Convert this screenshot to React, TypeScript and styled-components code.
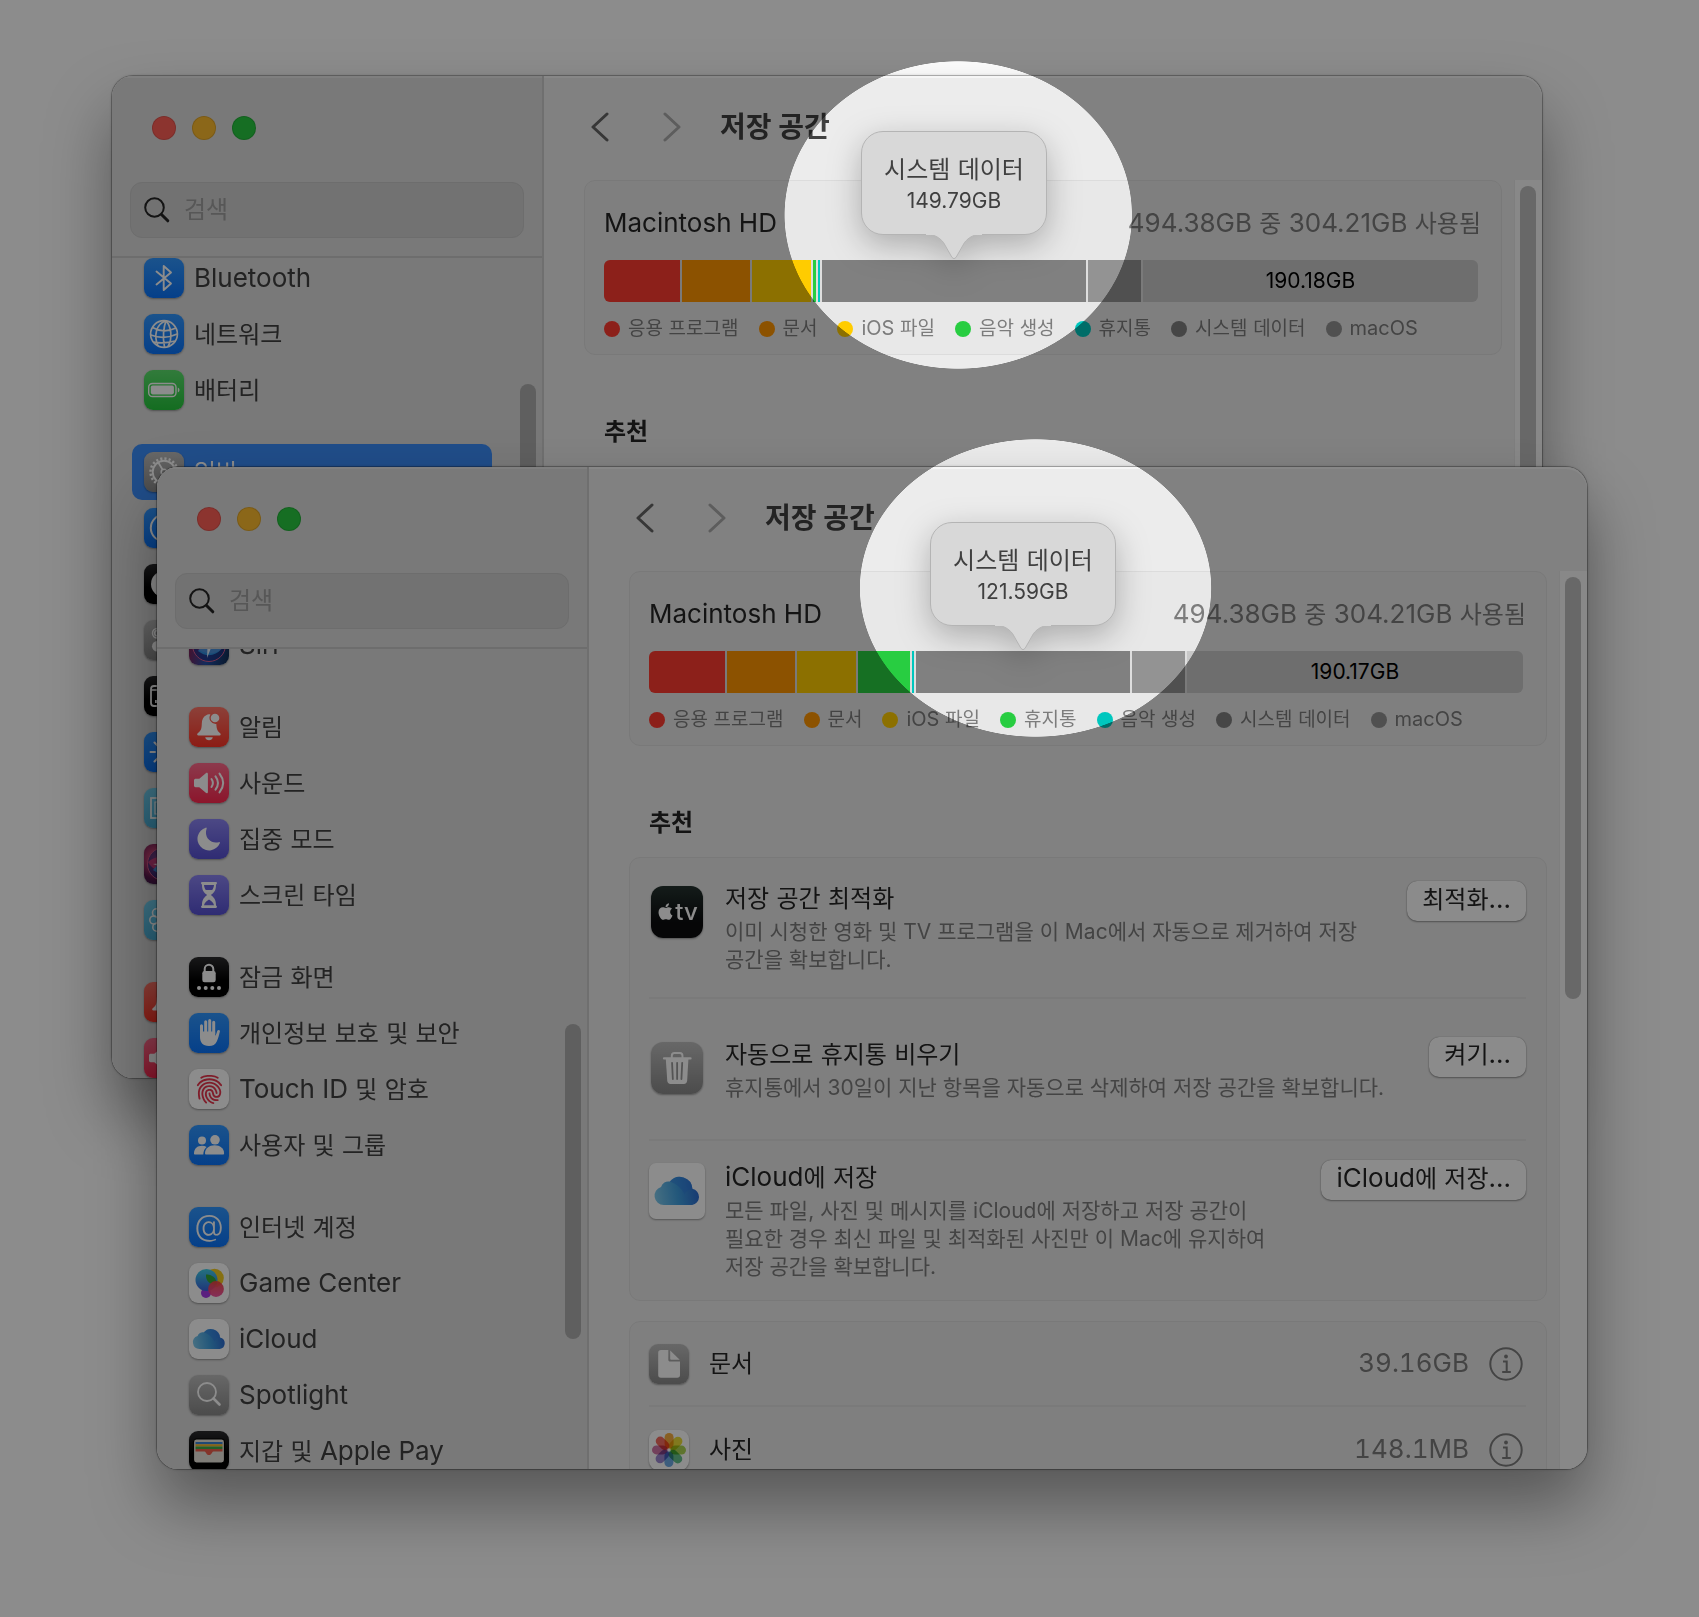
import React from "react";
import styled, { createGlobalStyle, css } from "styled-components";
import { FaApple } from "react-icons/fa";
import { IoFingerPrint } from "react-icons/io5";

const FONT = `Inter, "Noto Sans CJK KR", sans-serif`;

const GlobalStyle = createGlobalStyle`
  * { box-sizing: border-box; }
  html, body { margin: 0; padding: 0; background: #fff; }
  body { font-family: ${FONT}; font-size: 24px; line-height: 36px; color: #262626; }
  button, input { font-family: inherit; font-size: inherit; line-height: inherit; color: inherit; margin: 0; }
  ul, h1, h2, h3, p { margin: 0; padding: 0; font-size: inherit; font-weight: inherit; }
  ul { list-style: none; }
  svg { display: block; }
`;

/* ---------- mixed Korean / Latin text ---------- */

const LatinRun = styled.span<{ $size: number }>`
  font-size: ${(p) => p.$size}px;
  line-height: 1;
`;

/* Latin letters look small beside Hangul, so Latin runs are set one step larger. */
const Mixed = ({ children, latin = 26 }: { children: string; latin?: number }) => (
  <span>
    {children
      .split(/([A-Za-z0-9. ]+)/)
      .filter(Boolean)
      .map((part, i) =>
        /^[A-Za-z0-9. ]/.test(part) ? (
          <LatinRun key={i} $size={latin}>
            {part}
          </LatinRun>
        ) : (
          part
        ),
      )}
  </span>
);

/* ---------- desktop ---------- */

const Desktop = styled.main`
  position: relative;
  min-height: 100vh;
  overflow: hidden;
`;

const Window = styled.section<{ $x: number; $y: number }>`
  position: absolute;
  left: ${(p) => p.$x}px;
  top: ${(p) => p.$y}px;
  width: calc(100% - 269px);
  height: calc(100vh - 615px);
  min-width: 1200px;
  min-height: 700px;
  border-radius: 21px;
  box-shadow: 0 0 0 1px rgba(0, 0, 0, 0.22), 0 0 3px rgba(0, 0, 0, 0.3), 0 36px 66px rgba(0, 0, 0, 0.38);
`;

const WindowBody = styled.div`
  display: flex;
  height: 100%;
  border-radius: inherit;
  overflow: hidden;
  background: #ececec;
  box-shadow: inset 0 2px 0 #f6f6f6;
`;

/* Darkens the desktop except for two elliptical spotlights. */
const Dim = styled.div`
  position: absolute;
  inset: 0;
  z-index: 10;
  pointer-events: none;
  background: rgba(0, 0, 0, 0.45);
  mask-image: radial-gradient(174px 154px at 56.4% 215px, transparent 99.6%, #000 100%),
    radial-gradient(176px 149px at 60.95% 588px, transparent 99.6%, #000 100%);
  mask-composite: intersect;
`;

/* ---------- sidebar ---------- */

const Sidebar = styled.aside`
  display: flex;
  flex-direction: column;
  flex: 0 0 432px;
  min-width: 0;
  background: #dcdcdc;
  border-right: 2px solid #cbcbcb;
  box-shadow: inset 0 2px 0 #e8e8e8;
`;

const Lights = styled.div`
  display: flex;
  gap: 16px;
  padding: 40px 40px 42px;
`;

const Light = styled.button<{ $color: string }>`
  width: 24px;
  height: 24px;
  padding: 0;
  border: 1px solid rgba(0, 0, 0, 0.12);
  border-radius: 50%;
  background: ${(p) => p.$color};
`;

const Search = styled.label`
  display: flex;
  align-items: center;
  gap: 14px;
  height: 56px;
  margin: 0 18px 18px;
  padding: 0 13px;
  border: 1px solid #c6c6c6;
  border-radius: 12px;
  background: #cfcfcf;
`;

const SearchInput = styled.input`
  flex: 1;
  width: 0;
  padding: 0;
  border: 0;
  outline: 0;
  background: transparent;
  &::placeholder { color: #9e9e9e; opacity: 1; }
`;

const SidebarScroll = styled.div`
  display: flex;
  flex: 1;
  min-height: 0;
  overflow: hidden;
  border-top: 2px solid #c6c6c6;
`;

const Nav = styled.nav`
  flex: 1;
  padding: 0 28px 0 20px;
`;

const Group = styled.ul`
  margin-bottom: 26px;
`;

const NavLink = styled.a<{ $selected?: boolean }>`
  display: flex;
  align-items: center;
  gap: 10px;
  height: 56px;
  padding: 0 12px;
  border-radius: 10px;
  color: #404040;
  text-decoration: none;
  white-space: nowrap;
  ${(p) => p.$selected && css`background: #3b8dfa; color: #fff;`}
`;

const NavLabel = styled.span`
  padding-top: 2px;
`;

const Track = styled.div<{ $main?: boolean }>`
  display: flex;
  flex: none;
  ${(p) =>
    p.$main
      ? css`width: 28px; padding: 6px 6px 0 5px; background: #f8f8f8; border-left: 1px solid #e6e6e6;`
      : css`width: 22px; padding: 0 6px 0 0;`}
`;

const Thumb = styled.div<{ $light?: boolean }>`
  width: 16px;
  border-radius: 8px;
  background: ${(p) => (p.$light ? "#bebebe" : "#adadad")};
`;

/* ---------- icon tiles ---------- */

const tones = {
  blue: "linear-gradient(#3197ff, #0a74fa)",
  green: "linear-gradient(#5be06c, #25c63c)",
  red: "linear-gradient(#ff7668, #ff3426)",
  pink: "linear-gradient(#ff6a8c, #ff2850)",
  purple: "linear-gradient(#8b84f2, #5650d2)",
  gray: "linear-gradient(#bdbdbd, #8a8a8a)",
  black: "linear-gradient(#2c2c2e, #000 60%)",
  white: "#fff",
  cyan: "linear-gradient(#74d4f5, #4bb4de)",
  siri: "radial-gradient(circle at 30% 35%, #ff5a8a, #5b1950 55%, #1a2050)",
  siriBlue: "linear-gradient(100deg, #8d1745, #2450a8 50%, #102c50)",
  tv: "linear-gradient(#25332f, #0b0c0e 70%)",
};
type Tone = keyof typeof tones;

const Tile = styled.span<{ $tone: Tone; $size?: number }>`
  display: flex;
  flex: none;
  align-items: center;
  justify-content: center;
  width: ${(p) => p.$size ?? 40}px;
  height: ${(p) => p.$size ?? 40}px;
  border-radius: ${(p) => (p.$size === 52 ? 12 : p.$size === 56 ? 7 : 9)}px;
  overflow: hidden;
  background: ${(p) => tones[p.$tone]};
  box-shadow: 0 1px 2px rgba(0, 0, 0, 0.35);
  color: #fff;
`;

const TvMark = styled.span`
  display: flex;
  align-items: center;
  font-size: 24px;
  font-weight: 500;
  line-height: 24px;
  svg { margin-bottom: 2px; }
`;

const AtMark = styled.span`
  height: 38px;
  font-size: 30px;
  font-weight: 300;
  line-height: 34px;
`;

const Glyph = ({ size = 40, children }: { size?: number; children: React.ReactNode }) => (
  <svg width={size} height={size} viewBox="0 0 40 40" fill="none" stroke="none" aria-hidden="true">
    {children}
  </svg>
);

const Cloud = ({ size, id }: { size: number; id: string }) => (
  <Glyph size={size}>
    <defs>
      <linearGradient id={id} x1="0" x2="1" y1="0.4" y2="0.3">
        <stop offset="0" stopColor="#7cc8ec" />
        <stop offset="0.5" stopColor="#3f9fe0" />
        <stop offset="1" stopColor="#2b67cf" />
      </linearGradient>
    </defs>
    <path
      fill={`url(#${id})`}
      d="M10.5 30A6.6 6.6 0 0 1 8.6 17.1a5.3 5.3 0 0 1 6.3-3.8A9.1 9.1 0 0 1 31 18.4a5.9 5.9 0 0 1-.2 11.6z"
    />
    <path
      fill="#2f7be0"
      fillOpacity="0.45"
      d="M14.9 13.3A9.1 9.1 0 0 1 31 18.4c-2.6.2-4.6 1.6-5.5 4-2.4-4.6-6-7.5-10.6-9.1z"
    />
  </Glyph>
);

const petals = ["#f7a224", "#e8d81c", "#9fce3a", "#4fb87c", "#5a9ee0", "#8d78c8", "#c9629a", "#f2584a"];

const glyphs: Record<string, React.ReactNode> = {
  bluetooth: (
    <Glyph>
      <path d="M12.5 13.5 27 25.5 19.7 32V8L27 14.5 12.5 26.5" stroke="#fff" strokeWidth="1.9" strokeLinejoin="round" strokeLinecap="round" />
    </Glyph>
  ),
  network: (
    <Glyph>
      <g stroke="#fff" strokeWidth="1.7">
        <circle cx="20" cy="20" r="13.4" />
        <path d="M22 6.8C12 10 9.5 22 14 32M22 6.8C27 12 29 24 24 32.5M22 6.8c-2.5 6-3.5 17-1.5 26.5M8.5 13.5c7 4 16 4 23.5.5M6.8 21c8 3 18 3 26.5-1M9.5 28c7 1.5 14 1 21.5-1" />
      </g>
    </Glyph>
  ),
  battery: (
    <Glyph>
      <rect x="4.7" y="13.5" width="27.3" height="13" rx="3.8" stroke="#fff" strokeWidth="1.4" />
      <rect x="6.8" y="15.6" width="23.1" height="8.8" rx="1.8" fill="#fff" />
      <path d="M33.8 17.5c2.2.8 2.2 4.2 0 5z" fill="#fff" />
    </Glyph>
  ),
  gear: (
    <Glyph>
      <circle cx="20" cy="20" r="13.5" stroke="#fff" strokeWidth="2.5" strokeDasharray="2.2 2.04" />
      <circle cx="20" cy="20" r="11.3" stroke="#fff" strokeWidth="1.9" />
      <path d="M20 20l-5.7-9.5M20 20l11 0M20 20l-5.7 9.5" stroke="#fff" strokeWidth="1.8" />
      <circle cx="20" cy="20" r="2.8" fill="#aaa" stroke="#fff" strokeWidth="1.6" />
    </Glyph>
  ),
  access: (
    <Glyph>
      <circle cx="20" cy="20" r="13.2" stroke="#fff" strokeWidth="2" />
      <circle cx="20" cy="13.5" r="2" fill="#fff" />
      <path d="M13 17.5l7 1.5 7-1.5M20 19v5l-3 6M20 24l3 6" stroke="#fff" strokeWidth="2" />
    </Glyph>
  ),
  appearance: (
    <Glyph>
      <circle cx="20" cy="20" r="13" fill="#fff" />
      <path d="M20 11a9 9 0 0 1 0 18z" fill="#000" />
    </Glyph>
  ),
  control: (
    <Glyph>
      <rect x="8.5" y="8.5" width="23" height="9.5" rx="4.7" stroke="#fff" strokeWidth="1.5" />
      <circle cx="13.3" cy="13.2" r="2.6" stroke="#fff" strokeWidth="1.5" />
      <rect x="8" y="21" width="24" height="10.5" rx="5.2" fill="#fff" />
    </Glyph>
  ),
  dock: (
    <Glyph>
      <rect x="7" y="10" width="26" height="20" rx="3" stroke="#fff" strokeWidth="1.8" />
      <path d="M7 14h26" stroke="#fff" strokeWidth="1.5" />
      <path d="M11 24h3v3h-3zM17 24h3v3h-3z" fill="#fff" />
    </Glyph>
  ),
  sun: (
    <Glyph>
      <circle cx="20" cy="20" r="5.5" fill="#fff" />
      <path d="M20 6.5v4.5M20 29v4.5M6.5 20H11M29 20h4.5M10.5 10.5l3.2 3.2M26.3 26.3l3.2 3.2M29.5 10.5l-3.2 3.2M13.7 26.3l-3.2 3.2" stroke="#fff" strokeWidth="2" strokeLinecap="round" />
    </Glyph>
  ),
  wallpaper: (
    <Glyph>
      <rect x="7" y="10" width="26" height="20" stroke="#fff" strokeWidth="1.8" />
      <path d="M11 14h18v12H11z" stroke="#fff" strokeWidth="1.2" />
    </Glyph>
  ),
  siri: (
    <Glyph>
      <circle cx="20" cy="20" r="16.5" fill="#1d2f86" fillOpacity="0.6" stroke="#d45a8a" strokeWidth="1" />
      <path d="M4 18c9-8 22-6 31 4-10 10-24 8-31-4z" fill="#e8407c" fillOpacity="0.75" />
      <path d="M36 18c-8-6-20-2-27 8 10 8 22 4 27-8z" fill="#2fa2f0" fillOpacity="0.8" />
      <path d="M20 10l1.8 10L32 24l-10.4 0L18 33l.4-9.5L9 20l9.8-1z" fill="#fff" fillOpacity="0.85" />
    </Glyph>
  ),
  flower: (
    <Glyph>
      <g stroke="#fff" strokeWidth="1.6">
        <circle cx="20" cy="11.5" r="4.5" />
        <circle cx="20" cy="28.5" r="4.5" />
        <circle cx="12.5" cy="12.8" r="4" />
        <circle cx="9.8" cy="20" r="4" />
        <circle cx="12.8" cy="27.2" r="4" />
      </g>
    </Glyph>
  ),
  bell: (
    <Glyph>
      <path d="M17.2 8.3c1.4-1.3 3.2-1.3 4.2-.8a6.2 6.2 0 0 0 5.9 9.4c.4 5.8 1.4 7.4 3.9 9.3.9.7.7 2.2-.7 2.2h-21c-1.5 0-1.8-1.5-.8-2.2 3.6-2.7 3.9-4.6 4.1-9.7.1-4 1.5-6.7 4.4-8.2z" fill="#fff" />
      <path d="M16.2 30.3h7.6c-.5 3.8-7.1 3.8-7.6 0z" fill="#fff" />
      <circle cx="26" cy="11" r="4.3" fill="#fff" />
    </Glyph>
  ),
  sound: (
    <Glyph>
      <path d="M5 17.5c0-1.2.7-1.7 1.7-1.7h3.6l6.5-5.6c1-.8 2.1-.4 2.1.9v17.8c0 1.3-1.1 1.7-2.1.9l-6.5-5.6H6.7c-1 0-1.7-.5-1.7-1.7z" fill="#fff" />
      <path d="M22.5 16c1.8 2.6 1.8 5.4 0 8M26.5 13.3c3.2 4.3 3.2 9.1 0 13.4M30.5 10.6c4.7 6 4.7 12.8 0 18.8" stroke="#fff" strokeWidth="2" strokeLinecap="round" />
    </Glyph>
  ),
  moon: (
    <Glyph>
      <path d="M16.7 8.7c.8-.3 1.2.2.9 1-2.8 8.5 3.9 15.6 12.2 13.5.9-.3 1.4.2 1 1A11.6 11.6 0 1 1 16.7 8.7z" fill="#fff" />
    </Glyph>
  ),
  hourglass: (
    <Glyph>
      <path d="M13 7h14c1.3 0 1.3 2.2 0 2.4 0 5.4-1.2 7.6-5.2 10.6 4 3 5.2 5.2 5.2 10.6 1.3.2 1.3 2.4 0 2.4H13c-1.3 0-1.3-2.2 0-2.4 0-5.4 1.2-7.6 5.2-10.6-4-3-5.2-5.2-5.2-10.6-1.3-.2-1.3-2.4 0-2.4z" fill="#fff" />
      <path d="M15 10h10c-.2 2.2-.8 3.8-1.8 5h-6.4c-1-1.2-1.6-2.8-1.8-5zM15 30.3c.5-2.5 2.5-4 5-5.7 2.5 1.7 4.5 3.2 5 5.7z" fill="#6a63dc" />
    </Glyph>
  ),
  lock: (
    <Glyph>
      <rect x="13.3" y="14" width="13.4" height="11.3" rx="2.2" fill="#fff" />
      <path d="M15.7 15v-3a4.3 4.3 0 0 1 8.6 0v3" stroke="#fff" strokeWidth="2" />
      <g fill="#fff">
        <circle cx="10" cy="31" r="2" />
        <circle cx="16.7" cy="31" r="2" />
        <circle cx="23.3" cy="31" r="2" />
        <circle cx="30" cy="31" r="2" />
      </g>
    </Glyph>
  ),
  hand: (
    <Glyph>
      <path d="M12.5 12.7V23M16.7 8.8V20M20.7 7.6V20M24.7 9.2V21" stroke="#fff" strokeWidth="3" strokeLinecap="round" />
      <path d="M11 18.5h15.2v4.3c.8-.7 1.5-3.3 2.1-5 .6-1.5 3-1 2.6.8-.9 3.5-1.5 6.6-3 9.6-1.6 3.3-4 4.8-7.9 4.8-6.5 0-9-4-9-9.3z" fill="#fff" />
    </Glyph>
  ),
  touch: <IoFingerPrint size={31} color="#e8364e" />,
  users: (
    <Glyph>
      <circle cx="13" cy="15.5" r="4" fill="#fff" />
      <path d="M5 28.5c0-5 3.5-7.7 8-7.7 1.8 0 3.3.4 4.6 1.2-2 1.6-3.2 4.2-3.3 7.5H6.2c-.8 0-1.2-.4-1.2-1z" fill="#fff" />
      <circle cx="26" cy="14.8" r="4.8" fill="#fff" />
      <path d="M16 28.3c0-5 4.3-8 9.7-8 5.3 0 9.4 3 9.4 8 0 .8-.4 1.2-1.2 1.2H17.2c-.8 0-1.2-.4-1.2-1.2z" fill="#fff" />
    </Glyph>
  ),
  at: <AtMark aria-hidden="true">@</AtMark>,
  game: (
    <Glyph>
      <defs>
        <linearGradient id="gc-blue" x1="0" x2="0" y1="0" y2="1">
          <stop offset="0" stopColor="#3fd0e8" />
          <stop offset="1" stopColor="#3a63e0" />
        </linearGradient>
        <linearGradient id="gc-pink" x1="0" x2="0" y1="0" y2="1">
          <stop offset="0" stopColor="#f4403c" />
          <stop offset="1" stopColor="#f0469a" />
        </linearGradient>
      </defs>
      <circle cx="25.5" cy="15" r="9.3" fill="#f4cc20" />
      <circle cx="17" cy="30" r="5" fill="#a63be8" />
      <circle cx="17.5" cy="17" r="11" fill="url(#gc-blue)" />
      <path d="M17 11.5a9.3 9.3 0 0 1 10.5 10.2A9.3 9.3 0 0 1 17 11.5z" fill="#33a838" />
      <circle cx="27" cy="26" r="7.9" fill="url(#gc-pink)" fillOpacity="0.92" />
    </Glyph>
  ),
  icloud: <Cloud size={40} id="cloud-sm" />,
  spotlight: (
    <Glyph>
      <circle cx="18" cy="17" r="9" stroke="#fff" strokeWidth="1.8" />
      <path d="M24.5 23.5l6 6" stroke="#fff" strokeWidth="2.6" strokeLinecap="round" />
    </Glyph>
  ),
  wallet: (
    <Glyph>
      <rect x="4.5" y="8" width="31" height="24" rx="3" fill="#e8e4da" stroke="#000" strokeWidth="1.2" />
      <path d="M6.5 11h27v2.3h-27z" fill="#3a86d8" />
      <path d="M6.5 13.3h27v2.3h-27z" fill="#f0b428" />
      <path d="M6.5 15.6h27v2.3h-27z" fill="#3fae49" />
      <path d="M6.5 17.9h27v2.6h-9c-.6 0-1 .3-1.3.9-1.5 3.4-5 3.4-6.5 0-.3-.6-.7-.9-1.3-.9H6.5z" fill="#f0604e" />
    </Glyph>
  ),
  trash: (
    <Glyph size={52}>
      <path d="M16 13v-2.5c0-1.2.8-2 2-2h4.2c1.2 0 2 .8 2 2V13" stroke="#fff" strokeWidth="1.5" />
      <path d="M10 12.6h20.4" stroke="#fff" strokeWidth="1.7" strokeLinecap="round" />
      <path d="M11.4 13h17.4l-1 16.8c-.1 1.5-1 2.5-2.5 2.5H15c-1.5 0-2.4-1-2.5-2.5z" fill="#fff" />
      <path d="M16.2 16l.6 12.5M20.1 16v12.5M24 16l-.6 12.5" stroke="#9a9a9a" strokeWidth="1.4" strokeLinecap="round" />
    </Glyph>
  ),
  doc: (
    <Glyph>
      <path d="M12 6h7.3v9.5c0 1.4.6 2 2 2H31V31c0 1.8-1 2.8-2.8 2.8H12c-1.8 0-2.8-1-2.8-2.8V8.8C9.2 7 10.2 6 12 6z" fill="#fff" />
      <path d="M21.2 6.5l9.5 9.3h-8.2c-.9 0-1.3-.4-1.3-1.3z" fill="#fff" />
    </Glyph>
  ),
  photos: (
    <Glyph>
      {petals.map((c, i) => (
        <rect
          key={c}
          x="15.6"
          y="3"
          width="9"
          height="15.5"
          rx="4.5"
          fill={c}
          fillOpacity="0.88"
          transform={`rotate(${i * 45} 20 20)`}
          style={{ mixBlendMode: "multiply" }}
        />
      ))}
    </Glyph>
  ),
};

/* ---------- main pane ---------- */

const Pane = styled.div`
  display: flex;
  flex-direction: column;
  flex: 1;
  min-width: 0;
`;

const Toolbar = styled.header`
  display: flex;
  align-items: center;
  flex: none;
  gap: 24px;
  height: 104px;
  padding: 0 0 2px 32px;
`;

const Step = styled.button`
  display: flex;
  justify-content: center;
  width: 48px;
  padding: 0;
  border: 0;
  background: transparent;
  color: #646464;
  &:disabled { color: #a9a9a9; }
`;

const Title = styled.h1`
  font-size: 28px;
  font-weight: 700;
  color: #404040;
`;

const PaneRow = styled.div`
  display: flex;
  flex: 1;
  min-height: 0;
`;

const Content = styled.div`
  flex: 1;
  min-width: 0;
  padding: 0 12px 0 40px;
`;

const Card = styled.div`
  margin-bottom: 20px;
  padding: 0 20px 0 19px;
  border: 1px solid #dcdcdc;
  border-radius: 11px;
  background: #e8e8e8;
`;

const UsageCard = styled(Card)`
  height: 175px;
  margin-bottom: 0;
  padding-top: 25px;
`;

const UsageHead = styled.div`
  display: flex;
  justify-content: space-between;
  margin-bottom: 18px;
  white-space: nowrap;
`;

const Muted = styled.span`
  color: #7c7c7c;
`;

const Amount = styled(Muted)`
  font-variant-numeric: tabular-nums;
`;

const Bar = styled.div`
  display: flex;
  gap: 2px;
  height: 42px;
  margin: 0 3px 13px 0;
  border-radius: 6px;
  background: #dedede;
`;

const Segment = styled.div`
  position: relative;
  display: flex;
  align-items: center;
  justify-content: center;
  flex-basis: 0;
  min-width: 0;
  font-size: 21px;
  color: #000;
  &:first-child { border-radius: 6px 0 0 6px; }
  &:last-child { border-radius: 0 6px 6px 0; }
`;

const Bubble = styled.div`
  position: absolute;
  left: 50%;
  bottom: calc(100% + 25px);
  z-index: 2;
  width: 186px;
  height: 104px;
  padding-top: 21px;
  transform: translateX(-50%);
  border: 1px solid #b4b4b4;
  border-radius: 22px;
  background: #d8d8d8;
  color: #404040;
  text-align: center;
  white-space: nowrap;
  filter: drop-shadow(0 10px 16px rgba(0, 0, 0, 0.26));
  svg { position: absolute; left: 64px; top: 100%; }
`;

const BubbleName = styled.div`
  font-size: 24px;
  line-height: 34px;
`;

const BubbleSize = styled.div`
  font-size: 21px;
  line-height: 28px;
`;

const Legend = styled.ul`
  display: flex;
  gap: 20px;
  font-size: 19px;
  line-height: 28px;
  color: #7c7c7c;
  white-space: nowrap;
`;

const LegendItem = styled.li<{ $color: string }>`
  display: flex;
  align-items: center;
  gap: 8px;
  &::before {
    content: "";
    width: 16px;
    height: 16px;
    border-radius: 50%;
    background: ${(p) => p.$color};
  }
`;

const SectionTitle = styled.h2`
  padding: 59px 20px 16px;
  font-weight: 700;
`;

const Tip = styled.div`
  display: flex;
  align-items: center;
  min-height: 139px;
  padding: 19px 0 19px;
  & + & { border-top: 2px solid #dfdfdf; min-height: 142px; }
`;

const TipInner = styled.div`
  display: flex;
  align-items: flex-start;
  flex: 1;
  gap: 20px;
`;

const TipIcon = styled.div`
  display: flex;
  align-items: center;
  justify-content: center;
  flex: none;
  width: 56px;
  height: 56px;
  margin-top: 3px;
`;

const TipText = styled.div`
  flex: 1;
  min-width: 0;
  p {
    margin-top: 1px;
    font-size: 21px;
    line-height: 28px;
    color: #7c7c7c;
    word-break: keep-all;
  }
`;

const PushButton = styled.button`
  flex: none;
  height: 40px;
  padding: 0 15px 3px;
  border: 0;
  border-radius: 10px;
  background: #fdfdfd;
  box-shadow: 0 0 1px rgba(0, 0, 0, 0.4), 0 1px 2px rgba(0, 0, 0, 0.35);
`;

const Category = styled.li`
  display: flex;
  align-items: center;
  gap: 20px;
  height: 83px;
  padding-right: 3px;
  & + & { border-top: 2px solid #dfdfdf; height: 88px; }
`;

const CategoryName = styled.span`
  flex: 1;
`;

const InfoButton = styled.button`
  display: flex;
  padding: 0;
  border: 0;
  background: transparent;
  color: #7c7c7c;
`;

/* ---------- data ---------- */

type NavItem = { icon: string; tone: Tone; label: string; hideLabel?: boolean; selected?: boolean };
type Seg = { size: number; color: string; label?: string; bubble?: string };

const RED = "#ff3b30";
const ORANGE = "#ff9500";
const YELLOW = "#ffcc00";
const GREEN = "#28cd41";
const TEAL = "#00c7be";
const SYSTEM = "#808080";
const MACOS = "#939393";
const FREE = "#c8c8c8";

const backNav: NavItem[][] = [
  [
    { icon: "bluetooth", tone: "blue", label: "Bluetooth" },
    { icon: "network", tone: "blue", label: "네트워크" },
    { icon: "battery", tone: "green", label: "배터리" },
  ],
  [
    { icon: "gear", tone: "gray", label: "일반", selected: true },
    { icon: "access", tone: "blue", label: "손쉬운 사용", hideLabel: true },
    { icon: "appearance", tone: "black", label: "화면 모드", hideLabel: true },
    { icon: "control", tone: "gray", label: "제어 센터", hideLabel: true },
    { icon: "dock", tone: "black", label: "데스크탑 및 Dock", hideLabel: true },
    { icon: "sun", tone: "blue", label: "디스플레이", hideLabel: true },
    { icon: "wallpaper", tone: "cyan", label: "배경화면", hideLabel: true },
    { icon: "siri", tone: "siri", label: "Siri", hideLabel: true },
    { icon: "flower", tone: "cyan", label: "화면 보호기", hideLabel: true },
  ],
  [
    { icon: "bell", tone: "red", label: "알림", hideLabel: true },
    { icon: "sound", tone: "pink", label: "사운드", hideLabel: true },
  ],
];

const frontNav: NavItem[][] = [
  [{ icon: "siri", tone: "siriBlue", label: "Siri" }],
  [
    { icon: "bell", tone: "red", label: "알림" },
    { icon: "sound", tone: "pink", label: "사운드" },
    { icon: "moon", tone: "purple", label: "집중 모드" },
    { icon: "hourglass", tone: "purple", label: "스크린 타임" },
  ],
  [
    { icon: "lock", tone: "black", label: "잠금 화면" },
    { icon: "hand", tone: "blue", label: "개인정보 보호 및 보안" },
    { icon: "touch", tone: "white", label: "Touch ID 및 암호" },
    { icon: "users", tone: "blue", label: "사용자 및 그룹" },
  ],
  [
    { icon: "at", tone: "blue", label: "인터넷 계정" },
    { icon: "game", tone: "white", label: "Game Center" },
    { icon: "icloud", tone: "white", label: "iCloud" },
    { icon: "spotlight", tone: "gray", label: "Spotlight" },
    { icon: "wallet", tone: "black", label: "지갑 및 Apple Pay" },
  ],
];

const backUsage: Seg[] = [
  { size: 76, color: RED },
  { size: 68, color: ORANGE },
  { size: 59, color: YELLOW },
  { size: 3, color: GREEN },
  { size: 2, color: TEAL },
  { size: 264, color: SYSTEM, bubble: "149.79GB" },
  { size: 53, color: MACOS },
  { size: 335, color: FREE, label: "190.18GB" },
];

const frontUsage: Seg[] = [
  { size: 76, color: RED },
  { size: 68, color: ORANGE },
  { size: 59, color: YELLOW },
  { size: 52, color: GREEN },
  { size: 2, color: TEAL },
  { size: 214, color: SYSTEM, bubble: "121.59GB" },
  { size: 53, color: MACOS },
  { size: 336, color: FREE, label: "190.17GB" },
];

const legendColors = [RED, ORANGE, YELLOW, GREEN, TEAL, SYSTEM, MACOS];
const backLegend = ["응용 프로그램", "문서", "iOS 파일", "음악 생성", "휴지통", "시스템 데이터", "macOS"];
const frontLegend = ["응용 프로그램", "문서", "iOS 파일", "휴지통", "음악 생성", "시스템 데이터", "macOS"];

const tips = [
  {
    title: "저장 공간 최적화",
    text: "이미 시청한 영화 및 TV 프로그램을 이 Mac에서 자동으로 제거하여 저장 공간을 확보합니다.",
    action: "최적화...",
    icon: (
      <Tile $tone="tv" $size={52}>
        <TvMark>
          <FaApple size={19} />
          tv
        </TvMark>
      </Tile>
    ),
  },
  {
    title: "자동으로 휴지통 비우기",
    text: "휴지통에서 30일이 지난 항목을 자동으로 삭제하여 저장 공간을 확보합니다.",
    action: "켜기...",
    icon: (
      <Tile $tone="gray" $size={52}>
        {glyphs.trash}
      </Tile>
    ),
  },
  {
    title: "iCloud에 저장",
    text: "모든 파일, 사진 및 메시지를 iCloud에 저장하고 저장 공간이 필요한 경우 최신 파일 및 최적화된 사진만 이 Mac에 유지하여 저장 공간을 확보합니다.",
    action: "iCloud에 저장...",
    icon: (
      <Tile $tone="white" $size={56}>
        <Cloud size={56} id="cloud-lg" />
      </Tile>
    ),
  },
];

const categories: { icon: string; tone: Tone; name: string; size: string }[] = [
  { icon: "doc", tone: "gray", name: "문서", size: "39.16GB" },
  { icon: "photos", tone: "white", name: "사진", size: "148.1MB" },
];

/* ---------- pieces ---------- */

const SettingsSidebar = ({ id, groups, scroll, thumb }: { id: string; groups: NavItem[][]; scroll: number; thumb: [number, number] }) => (
  <Sidebar>
    <Lights>
      <Light type="button" $color="#ff5f57" aria-label="닫기" />
      <Light type="button" $color="#febc2e" aria-label="최소화" />
      <Light type="button" $color="#28c840" aria-label="확대" />
    </Lights>
    <Search htmlFor={id}>
      <svg width="26" height="26" viewBox="0 0 26 26" fill="none" stroke="#262626" aria-hidden="true">
        <circle cx="10.5" cy="10.5" r="9.3" strokeWidth="2" />
        <path d="M17.5 17.5l6.3 6.3" strokeWidth="3" strokeLinecap="round" />
      </svg>
      <SearchInput id={id} type="text" placeholder="검색" aria-label="검색" />
    </Search>
    <SidebarScroll>
      <Nav style={{ marginTop: -scroll }}>
        {groups.map((group, i) => (
          <Group key={i}>
            {group.map((item) => (
              <li key={item.label}>
                <NavLink href="#" $selected={item.selected} aria-label={item.label}>
                  <Tile $tone={item.tone}>{glyphs[item.icon]}</Tile>
                  {!item.hideLabel && (
                    <NavLabel>
                      <Mixed>{item.label}</Mixed>
                    </NavLabel>
                  )}
                </NavLink>
              </li>
            ))}
          </Group>
        ))}
      </Nav>
      <Track>
        <Thumb style={{ marginTop: thumb[0], height: thumb[1] }} />
      </Track>
    </SidebarScroll>
  </Sidebar>
);

const Usage = ({ segments, legend }: { segments: Seg[]; legend: string[] }) => (
  <UsageCard>
    <UsageHead>
      <Mixed>Macintosh HD</Mixed>
      <Muted>
        <Mixed>494.38GB 중 304.21GB 사용됨</Mixed>
      </Muted>
    </UsageHead>
    <Bar>
      {segments.map((s, i) => (
        <Segment key={i} style={{ flexGrow: s.size, background: s.color }}>
          {s.label}
          {s.bubble && (
            <Bubble role="tooltip">
              <BubbleName>
                <Mixed>시스템 데이터</Mixed>
              </BubbleName>
              <BubbleSize>{s.bubble}</BubbleSize>
              <svg width="56" height="27" viewBox="0 0 56 27" aria-hidden="true">
                <path d="M0 0C8 .5 13 3 17.5 8.5L26 23.5Q28 26 30 23.5L38.5 8.5C43 3 48 .5 56 0" fill="#d8d8d8" stroke="#b4b4b4" />
                <path d="M0 0h56" stroke="#d8d8d8" strokeWidth="2" />
              </svg>
            </Bubble>
          )}
        </Segment>
      ))}
    </Bar>
    <Legend>
      {legend.map((name, i) => (
        <LegendItem key={name} $color={legendColors[i]}>
          <Mixed latin={20}>{name}</Mixed>
        </LegendItem>
      ))}
    </Legend>
  </UsageCard>
);

const StorageWindow = (props: {
  x: number;
  y: number;
  id: string;
  groups: NavItem[][];
  scroll: number;
  thumb: [number, number];
  segments: Seg[];
  legend: string[];
  children?: React.ReactNode;
}) => (
  <Window $x={props.x} $y={props.y}>
    <WindowBody>
      <SettingsSidebar id={props.id} groups={props.groups} scroll={props.scroll} thumb={props.thumb} />
      <Pane>
        <Toolbar>
          <Step type="button" aria-label="뒤로">
            <svg width="18" height="30" viewBox="0 0 18 30" fill="none" stroke="currentColor" strokeWidth="3" strokeLinecap="round" strokeLinejoin="round">
              <path d="M16 2 2 15 16 28" />
            </svg>
          </Step>
          <Step type="button" aria-label="앞으로" disabled>
            <svg width="18" height="30" viewBox="0 0 18 30" fill="none" stroke="currentColor" strokeWidth="3" strokeLinecap="round" strokeLinejoin="round">
              <path d="M2 2 16 15 2 28" />
            </svg>
          </Step>
          <Title>저장 공간</Title>
        </Toolbar>
        <PaneRow>
          <Content>
            <Usage segments={props.segments} legend={props.legend} />
            <SectionTitle>추천</SectionTitle>
            {props.children}
          </Content>
          <Track $main>
            <Thumb $light style={{ height: 422 }} />
          </Track>
        </PaneRow>
      </Pane>
    </WindowBody>
  </Window>
);

export default function App() {
  return (
    <>
      <GlobalStyle />
      <Desktop>
        <StorageWindow x={112} y={76} id="search-back" groups={backNav} scroll={8} thumb={[126, 315]} segments={backUsage} legend={backLegend} />
        <StorageWindow x={157} y={467} id="search-front" groups={frontNav} scroll={32} thumb={[375, 315]} segments={frontUsage} legend={frontLegend}>
          <Card>
            {tips.map((tip) => (
              <Tip key={tip.title}>
                <TipInner>
                  <TipIcon>{tip.icon}</TipIcon>
                  <TipText>
                    <h3>
                      <Mixed>{tip.title}</Mixed>
                    </h3>
                    <p>{tip.text}</p>
                  </TipText>
                  <PushButton type="button">
                    <Mixed>{tip.action}</Mixed>
                  </PushButton>
                </TipInner>
              </Tip>
            ))}
          </Card>
          <Card as="ul">
            {categories.map((c) => (
              <Category key={c.name}>
                <Tile $tone={c.tone}>{glyphs[c.icon]}</Tile>
                <CategoryName>{c.name}</CategoryName>
                <Amount>
                  <Mixed>{c.size}</Mixed>
                </Amount>
                <InfoButton type="button" aria-label={`${c.name} 정보`}>
                  <svg width="34" height="34" viewBox="0 0 34 34" fill="none" stroke="currentColor">
                    <circle cx="17" cy="17" r="15.7" strokeWidth="2" />
                    <circle cx="17" cy="9.5" r="1.9" fill="currentColor" stroke="none" />
                    <path d="M14 14.5h3.7V25M13.2 25h8.6" strokeWidth="2" />
                  </svg>
                </InfoButton>
              </Category>
            ))}
          </Card>
        </StorageWindow>
        <Dim />
      </Desktop>
    </>
  );
}
